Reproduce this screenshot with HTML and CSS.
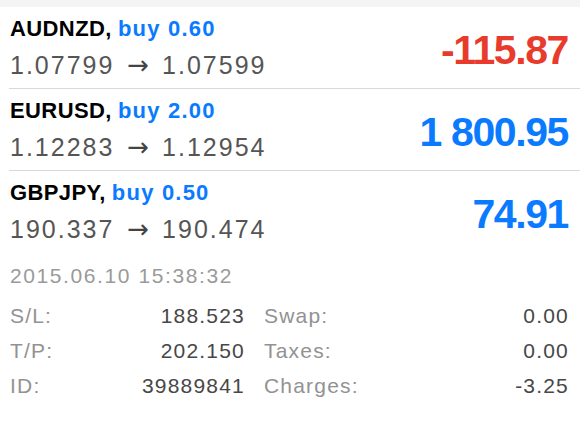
FILE: index.html
```html
<!DOCTYPE html>
<html lang="en">
<head>
  <meta charset="UTF-8" />
  <meta name="viewport" content="width=device-width, initial-scale=1.0"/>
  <title>Trade</title>
  <link rel="stylesheet" href="styles.css">
</head>
<body>
  <div class="topbar"></div>
  <ul class="positions">
    <li class="position">
      <div class="info">
        <div class="title"><span class="symbol">AUDNZD,</span> <span class="side">buy 0.60</span></div>
        <div class="prices">1.07799 <span class="arrow">→</span> 1.07599</div>
      </div>
      <div class="profit loss">-115.87</div>
    </li>
    <li class="position">
      <div class="info">
        <div class="title"><span class="symbol">EURUSD,</span> <span class="side">buy 2.00</span></div>
        <div class="prices">1.12283 <span class="arrow">→</span> 1.12954</div>
      </div>
      <div class="profit">1 800.95</div>
    </li>
    <li class="position">
      <div class="info">
        <div class="title"><span class="symbol">GBPJPY,</span> <span class="side">buy 0.50</span></div>
        <div class="prices">190.337 <span class="arrow">→</span> 190.474</div>
      </div>
      <div class="profit">74.91</div>
    </li>
  </ul>

  <div class="details">
    <div class="opened">2015.06.10 15:38:32</div>
    <div class="grid">
      <div class="pair"><span class="label">S/L:</span><span class="value">188.523</span></div>
      <div class="pair"><span class="label">Swap:</span><span class="value">0.00</span></div>
      <div class="pair"><span class="label">T/P:</span><span class="value">202.150</span></div>
      <div class="pair"><span class="label">Taxes:</span><span class="value">0.00</span></div>
      <div class="pair"><span class="label">ID:</span><span class="value">39889841</span></div>
      <div class="pair"><span class="label">Charges:</span><span class="value">-3.25</span></div>
    </div>
  </div>
</body>
</html>
```

FILE: styles.css
```css
body {
    margin: 0;
    background-color: #fff;
    font-family: "Liberation Sans", Arial, sans-serif;
}

.topbar {
    height: 7px;
    background-color: #f4f4f4;
}

.positions {
    list-style: none;
    margin: 0;
    padding: 0;
}

.position {
    display: flex;
    justify-content: space-between;
    align-items: center;
    margin-left: 9px;
    padding: 9px 0 8px 1px;
    border-bottom: 1px solid #d9d9d9;
}

.position:last-child {
    border-bottom: none;
}

.title {
    font-size: 22px;
    line-height: 26px;
    font-weight: bold;
    white-space: nowrap;
}

.symbol {
    color: #000;
    letter-spacing: 0.4px;
}

.side {
    color: #0a7bff;
    letter-spacing: 1.2px;
}

.prices {
    margin-top: 8px;
    font-size: 25px;
    line-height: 30px;
    letter-spacing: 2px;
    color: #555;
    white-space: nowrap;
}

.arrow {
    margin: 0 4px;
    font-family: "DejaVu Sans", sans-serif;
    font-size: 26px;
    letter-spacing: 0;
    color: #444;
}

.profit {
    padding: 4px 12px 0 0;
    font-size: 41px;
    line-height: 41px;
    font-weight: bold;
    letter-spacing: -1.4px;
    color: #0a7bff;
}

.profit.loss {
    color: #e83b2c;
}

.details {
    padding: 11px 11px 0 10px;
    font-size: 21px;
    line-height: 26px;
    letter-spacing: 1.2px;
}

.opened {
    color: #9a9a9a;
    letter-spacing: 1.6px;
}

.grid {
    display: grid;
    grid-template-columns: 235px 1fr;
    column-gap: 19px;
    row-gap: 9px;
    margin-top: 14px;
}

.pair {
    display: flex;
    justify-content: space-between;
}

.label {
    color: #929292;
}

.value {
    color: #474747;
}
```
